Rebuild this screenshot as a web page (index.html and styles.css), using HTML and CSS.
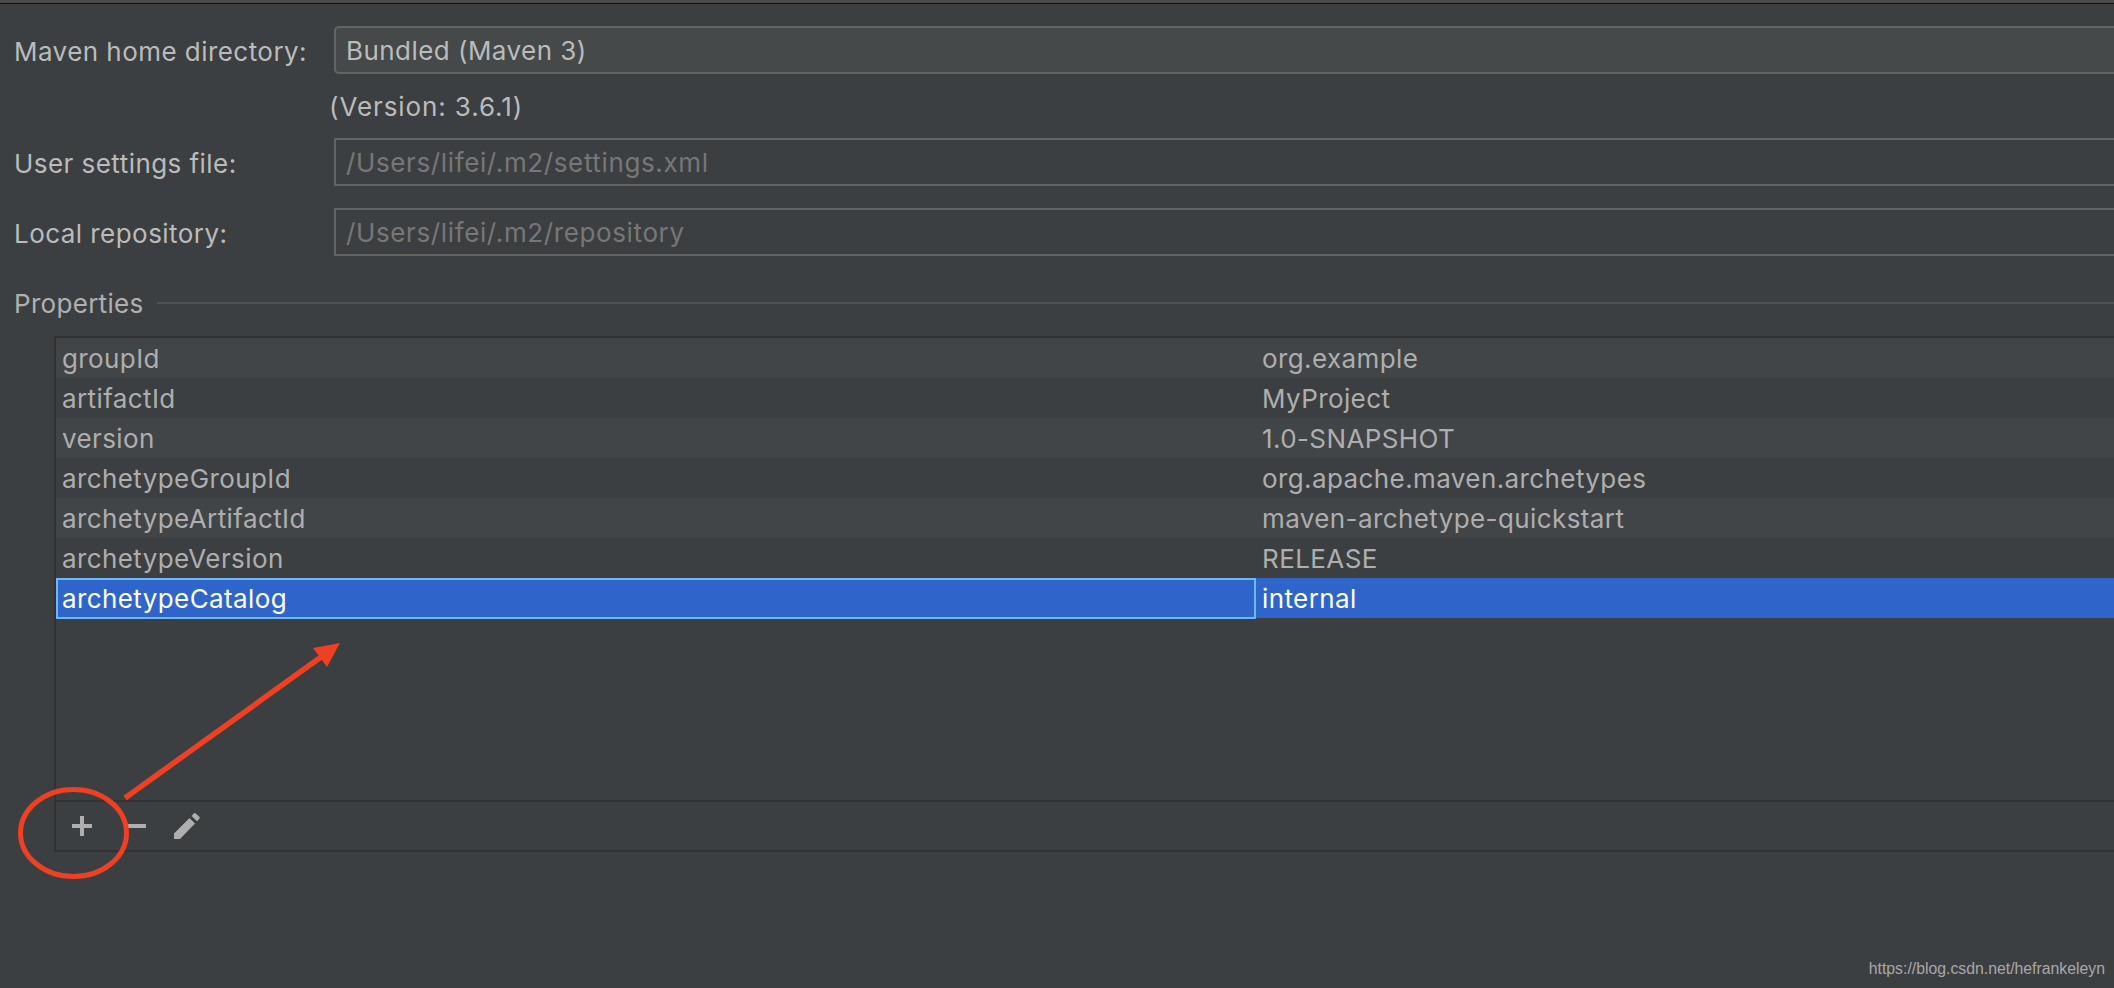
FILE: index.html
```html
<!DOCTYPE html>
<html lang="en">
<head>
<meta charset="utf-8">
<title>Maven settings</title>
<link rel="stylesheet" href="styles.css">
</head>
<body>
<div class="topbar"></div>
<main class="panel">
  <div class="row row-combo">
    <label class="label">Maven home directory:</label>
    <div class="field combo">Bundled (Maven 3)</div>
  </div>
  <div class="version">(Version: 3.6.1)</div>
  <div class="row row-settings">
    <label class="label">User settings file:</label>
    <div class="field disabled">/Users/lifei/.m2/settings.xml</div>
  </div>
  <div class="row row-repo">
    <label class="label">Local repository:</label>
    <div class="field disabled">/Users/lifei/.m2/repository</div>
  </div>
  <div class="section-title">
    <span>Properties</span>
    <span class="section-line"></span>
  </div>
  <section class="table-box">
    <div class="table">
      <div class="trow alt"><div class="cell key">groupId</div><div class="cell">org.example</div></div>
      <div class="trow"><div class="cell key">artifactId</div><div class="cell">MyProject</div></div>
      <div class="trow alt"><div class="cell key">version</div><div class="cell">1.0-SNAPSHOT</div></div>
      <div class="trow"><div class="cell key">archetypeGroupId</div><div class="cell">org.apache.maven.archetypes</div></div>
      <div class="trow alt"><div class="cell key">archetypeArtifactId</div><div class="cell">maven-archetype-quickstart</div></div>
      <div class="trow"><div class="cell key">archetypeVersion</div><div class="cell">RELEASE</div></div>
      <div class="trow selected"><div class="cell key focus">archetypeCatalog</div><div class="cell">internal</div></div>
    </div>
    <div class="toolbar">
      <svg class="icon icon-plus" width="20" height="20" viewBox="0 0 20 20"><path d="M8 0h4v8h8v4h-8v8H8v-8H0V8h8z"/></svg>
      <svg class="icon icon-minus" width="20" height="4" viewBox="0 0 20 4"><path d="M0 0h20v4H0z"/></svg>
      <svg class="icon icon-pencil" width="26" height="26" viewBox="0 0 26 26"><path d="M0 20.5 15.5 5l5.500 5.500L6 26H0zM17.500 3l2.300-2.500a1.500 1.500 0 0 1 2 0l3.500 3.300a1.500 1.500 0 0 1 0 2L23 8.300z"/></svg>
    </div>
  </section>
</main>
<svg class="annotation" width="2114" height="988" viewBox="0 0 2114 988">
  <ellipse cx="73.500" cy="833" rx="53" ry="43.500" fill="none" stroke="#ee4023" stroke-width="5"/>
  <path d="M125 798 328 652" fill="none" stroke="#ee4023" stroke-width="5.500"/>
  <path d="M340 643 313 648 327 667z" fill="#ee4023"/>
</svg>
<div class="watermark">https://blog.csdn.net/hefrankeleyn</div>
</body>
</html>
```

FILE: styles.css
```css
* { box-sizing: border-box; }
html, body { margin: 0; height: 100%; }
body {
  background: #3c3f41;
  color: #bbbbbb;
  font-family: Inter, "Noto Sans", sans-serif;
  font-size: 26px;
  letter-spacing: 0.45px;
  overflow: hidden;
  position: relative;
}
.topbar {
  height: 4px;
  background: #4b4b4b;
  border-bottom: 1px solid #111;
}
.panel { display: flex; flex-direction: column; }
.row { display: flex; align-items: center; height: 48px; padding-left: 14px; }
.row-combo { margin-top: 22px; }
.row-settings { margin-top: 0; }
.row-repo { margin-top: 22px; }
.label { width: 320px; flex: none; padding-top: 2px; }
.field {
  flex: 1;
  height: 48px;
  line-height: 46px;
  padding-left: 10px;
  border: 2px solid #646464;
  border-right: 0;
}
.combo { background: #45494a; border-radius: 5px 0 0 5px; }
.disabled { color: #777; letter-spacing: 0.62px; }
.version { height: 64px; line-height: 66px; padding-left: 329px; letter-spacing: 0.9px; }
.section-title {
  display: flex;
  align-items: center;
  gap: 13px;
  margin-top: 27px;
  height: 40px;
  padding-left: 14px;
  color: #b0b0b0;
  letter-spacing: 0.3px;
}
.section-line { flex: 1; height: 2px; background: #515151; }
.table-box {
  margin: 13px 0 0 54px;
  border-top: 2px solid #323232;
  border-left: 2px solid #323232;
  border-bottom: 2px solid #323232;
  height: 516px;
  display: flex;
  flex-direction: column;
}
.table { height: 464px; border-bottom: 2px solid #323232; }
.trow { display: grid; grid-template-columns: 1200px 1fr; height: 40px; line-height: 41px; color: #aeaeae; letter-spacing: 0.4px; }
.alt { background: #414547; }
.cell { padding-left: 6px; white-space: nowrap; }
.key { padding-left: 6px; }
.selected { background: #2f65ca; color: #fff; }
.focus { border: 2px solid #6db8f8; line-height: 37px; padding-left: 4px; }
.toolbar { display: flex; align-items: center; height: 48px; }
.icon { fill: #afafaf; flex: none; }
.icon-plus { margin-left: 16px; }
.icon-minus { margin-left: 34px; }
.icon-pencil { margin-left: 28px; }
.annotation { position: absolute; left: 0; top: 0; pointer-events: none; }
.watermark {
  position: absolute;
  right: 9px;
  top: 959px;
  font-family: "Liberation Sans", Arial, sans-serif;
  font-size: 15.8px;
  letter-spacing: 0;
  line-height: 20px;
  color: #a8a8a8;
}
```
